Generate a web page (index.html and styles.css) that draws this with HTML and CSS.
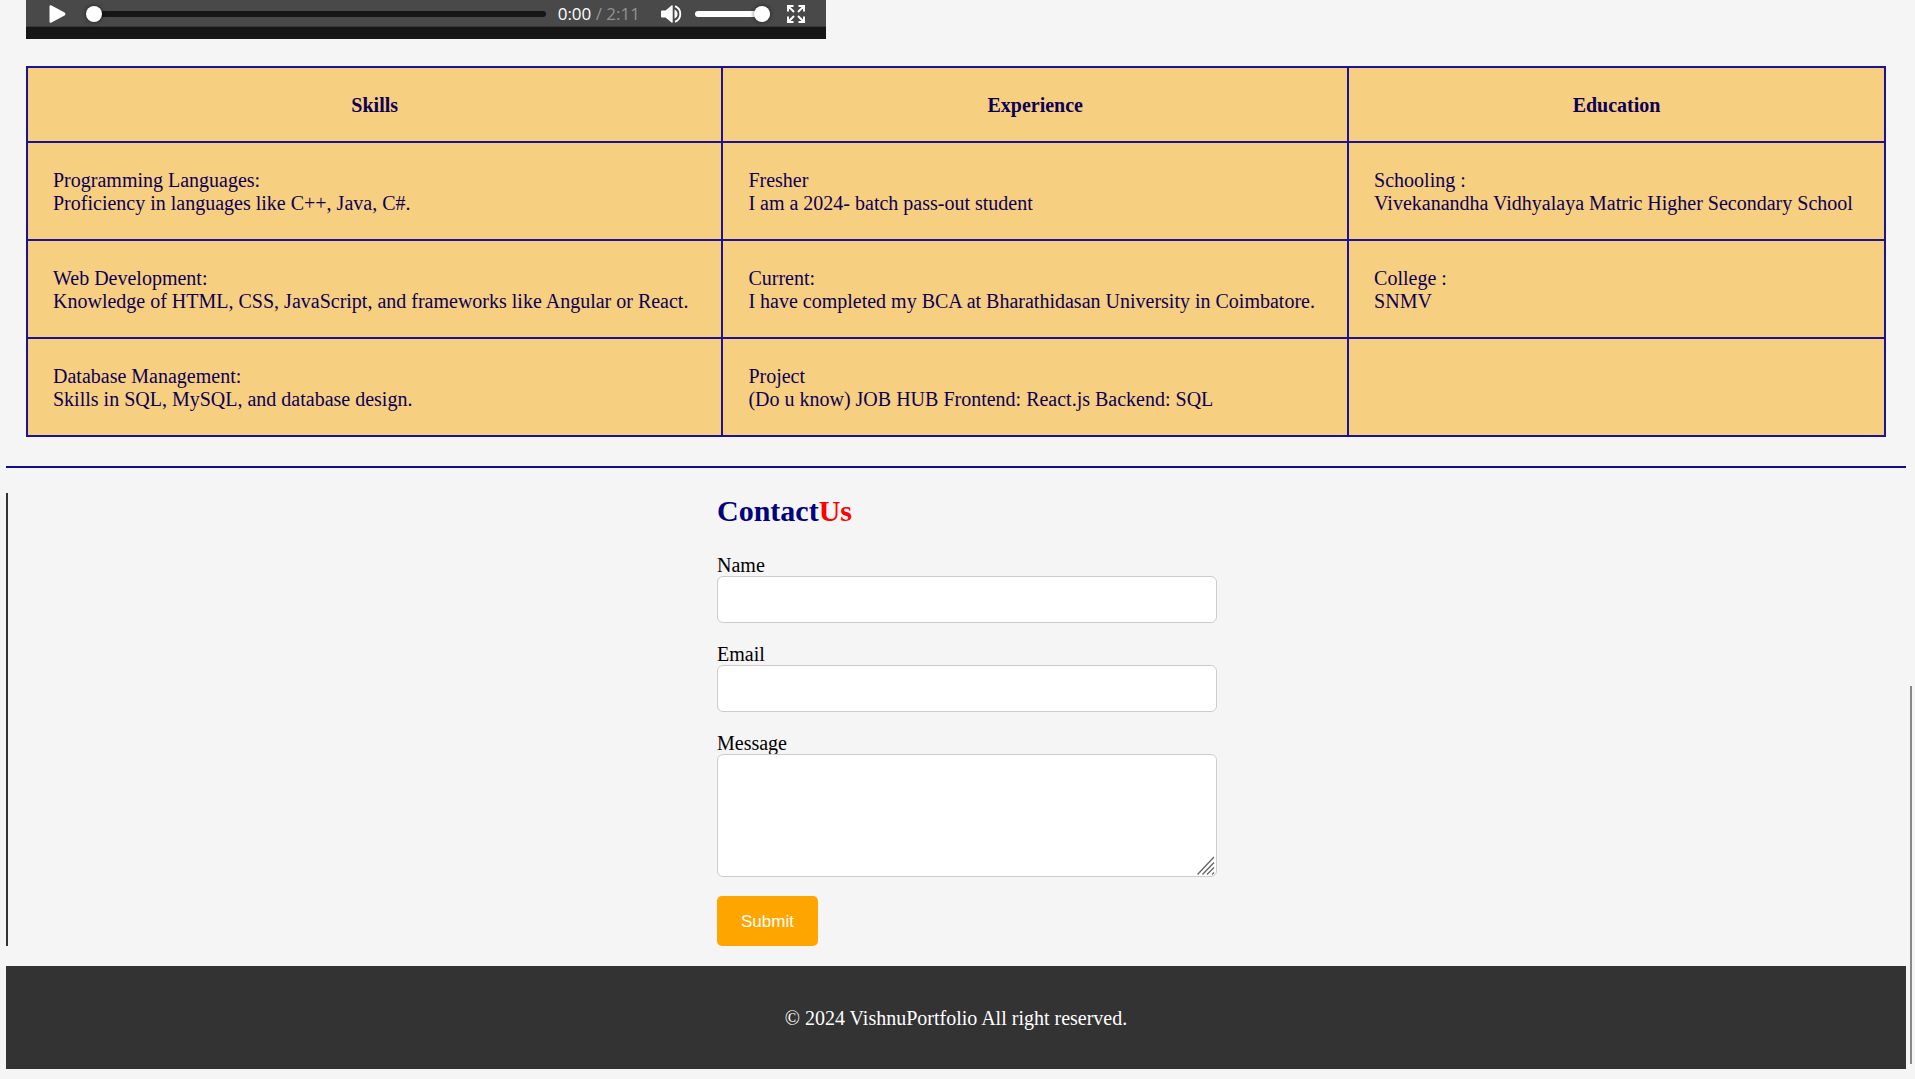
FILE: index.html
```html
<!DOCTYPE html>
<html lang="en">
<head>
<meta charset="utf-8">
<title>VishnuPortfolio</title>
<link rel="stylesheet" href="styles.css">
</head>
<body>
<section class="about">
  <div class="player">
    <div class="controls">
      <button class="icon-button" type="button" aria-label="Play">
        <svg width="17" height="18" viewBox="0 0 17 18"><path d="M.5 1.6Q.5-.6 2.5.5L15.600 7.600Q17.200 9 15.600 10.400L2.500 17.500Q.5 18.600.5 16.400Z" fill="#fff"/></svg>
      </button>
      <input class="range seek" type="range" min="0" max="131" value="0" aria-label="Seek">
      <span class="time">0:00 <span class="time-total">/ 2:11</span></span>
      <button class="icon-button volume-button" type="button" aria-label="Mute">
        <svg width="21" height="18" viewBox="0 0 21 18"><path d="M0 6.500Q0 5.500 1 5.500H4.500L10.500.5Q11.700 0 11.700 1V17Q11.700 18 10.500 17.500L4.500 12.500H1Q0 12.500 0 11.500Z" fill="#fff"/><path d="M13.500 4.500Q16.500 6 16.500 9T13.500 13.500Z" fill="#fff"/><path d="M14 1.200Q19.300 3.400 19.300 9T14 16.800" fill="none" stroke="#fff" stroke-width="1.800"/></svg>
      </button>
      <input class="range volume" type="range" min="0" max="100" value="100" aria-label="Volume">
      <button class="icon-button full-button" type="button" aria-label="Full screen">
        <svg width="18" height="18" viewBox="0 0 18 18" fill="none" stroke="#fff" stroke-width="2"><path d="M1 6.500V1H6.500M1 1L7 7M11.500 1H17V6.500M17 1L11 7M1 11.500V17H6.500M1 17L7 11M17 11.500V17H11.500M17 17L11 11"/></svg>
      </button>
    </div>
  </div>
  <table class="resume">
    <thead>
      <tr><th>Skills</th><th>Experience</th><th>Education</th></tr>
    </thead>
    <tbody>
      <tr>
        <td>Programming Languages:<br>Proficiency in languages like C++, Java, C#.</td>
        <td>Fresher<br>I am a 2024- batch pass-out student</td>
        <td>Schooling :<br>Vivekanandha Vidhyalaya Matric Higher Secondary School</td>
      </tr>
      <tr>
        <td>Web Development:<br>Knowledge of HTML, CSS, JavaScript, and frameworks like Angular or React.</td>
        <td>Current:<br>I have completed my BCA at Bharathidasan University in Coimbatore.</td>
        <td>College :<br>SNMV</td>
      </tr>
      <tr>
        <td>Database Management:<br>Skills in SQL, MySQL, and database design.</td>
        <td>Project<br>(Do u know) JOB HUB Frontend: React.js Backend: SQL</td>
        <td></td>
      </tr>
    </tbody>
  </table>
</section>
<hr class="divider">
<section class="contact">
  <form class="contact-form">
    <h2 class="contact-title">Contact<span class="accent">Us</span></h2>
    <div class="field">
      <label class="label" for="name">Name</label>
      <input class="box" id="name" type="text">
    </div>
    <div class="field">
      <label class="label" for="email">Email</label>
      <input class="box" id="email" type="email">
    </div>
    <div class="field">
      <label class="label" for="message">Message</label>
      <div class="message">
        <textarea class="box box-tall" id="message"></textarea>
        <svg class="grip" width="18" height="19" viewBox="0 0 18 19" fill="none" stroke="#666" stroke-width="1.300"><path d="M.5 18.500L17 1M5.500 18.500L17 6.500M10 18.500L17 11.500M15 18.500L17 16.500"/></svg>
      </div>
    </div>
    <button class="submit" type="submit">Submit</button>
  </form>
</section>
<footer class="footer">© 2024 VishnuPortfolio All right reserved.</footer>
<div class="scroll-thumb"></div>
</body>
</html>
```
FILE: styles.css
```css
* {
  box-sizing: border-box;
}

body {
  margin: 0 9px 0 6px;
  background: #f5f5f5;
  color: #000;
  font: 20px/23px "Liberation Serif", "Times New Roman", serif;
}

.about {
  padding: 0 20px;
}

/* Video player, scrolled so that only its control bar shows */
.player {
  width: 800px;
  max-width: 100%;
  padding-bottom: 12px;
  background: #161616;
}

.controls {
  display: flex;
  align-items: center;
  height: 27px;
  padding: 1px 21px 0 23px;
  background: #494949;
  border-bottom: 1px solid #373737;
}

.icon-button {
  display: flex;
  padding: 0;
  border: 0;
  background: none;
}

.range {
  appearance: none;
  height: 16px;
  margin: 0;
  background: none;
}

.range::-webkit-slider-runnable-track {
  height: 6px;
  border-radius: 3px;
  background: #161616;
}

.range::-webkit-slider-thumb {
  appearance: none;
  width: 16px;
  height: 16px;
  margin-top: -5px;
  border-radius: 50%;
  background: #fff;
  box-shadow: 0 0 4px rgba(0, 0, 0, 0.6);
}

.seek {
  flex: 1;
  min-width: 0;
  margin: 0 12px 0 20px;
}

.volume {
  width: 75px;
}

.volume::-webkit-slider-runnable-track {
  background: #fff;
}

.time {
  color: #fff;
  font: 17px/24px "Open Sans", sans-serif;
  white-space: nowrap;
}

.time-total {
  color: #929292;
}

.volume-button {
  margin: 0 13px 0 21px;
}

.full-button {
  margin-left: 17px;
}

.resume {
  width: 100%;
  margin-top: 27px;
  border-collapse: collapse;
  background: #f7cf81;
  color: #0c0055;
}

.resume th,
.resume td {
  padding: 26px 25px 24px;
  border: 2px solid #1b1294;
  text-align: left;
}

.resume th {
  text-align: center;
}

.divider {
  height: 2px;
  margin: 29px 0 25px;
  border: 0;
  background: #150c84;
}

.contact {
  display: flex;
  justify-content: center;
  padding-left: 20px;
  border-left: 2px solid #333;
}

.contact-form {
  width: 500px;
}

.contact-title {
  margin: 0 0 24px;
  color: #000080;
  font-size: 30px;
  line-height: 36px;
}

.accent {
  color: #f00;
}

.field {
  display: flex;
  flex-direction: column;
  margin-bottom: 19px;
}

.label {
  padding-top: 2px;
  line-height: 21px;
}

.box {
  display: block;
  width: 100%;
  height: 47px;
  padding: 12px;
  border: 1px solid #ccc;
  border-radius: 6px;
  background: #fff;
  font: 17px "Liberation Sans", Arial, sans-serif;
}

.box-tall {
  height: 123px;
  resize: none;
}

.message {
  position: relative;
}

.grip {
  position: absolute;
  right: 2px;
  bottom: 2px;
  pointer-events: none;
}

.submit {
  display: block;
  padding: 14px 24px 12px;
  border: 0;
  border-radius: 5px;
  background: #ffa500;
  color: #fff;
  font: 17px/24px "Liberation Sans", Arial, sans-serif;
}

.footer {
  margin: 20px 0 9px;
  padding: 41px 20px 39px;
  background: #333;
  color: #fff;
  text-align: center;
}

.scroll-thumb {
  position: fixed;
  right: 3px;
  bottom: 15px;
  width: 2px;
  height: 35vh;
  background: #888;
}
```
